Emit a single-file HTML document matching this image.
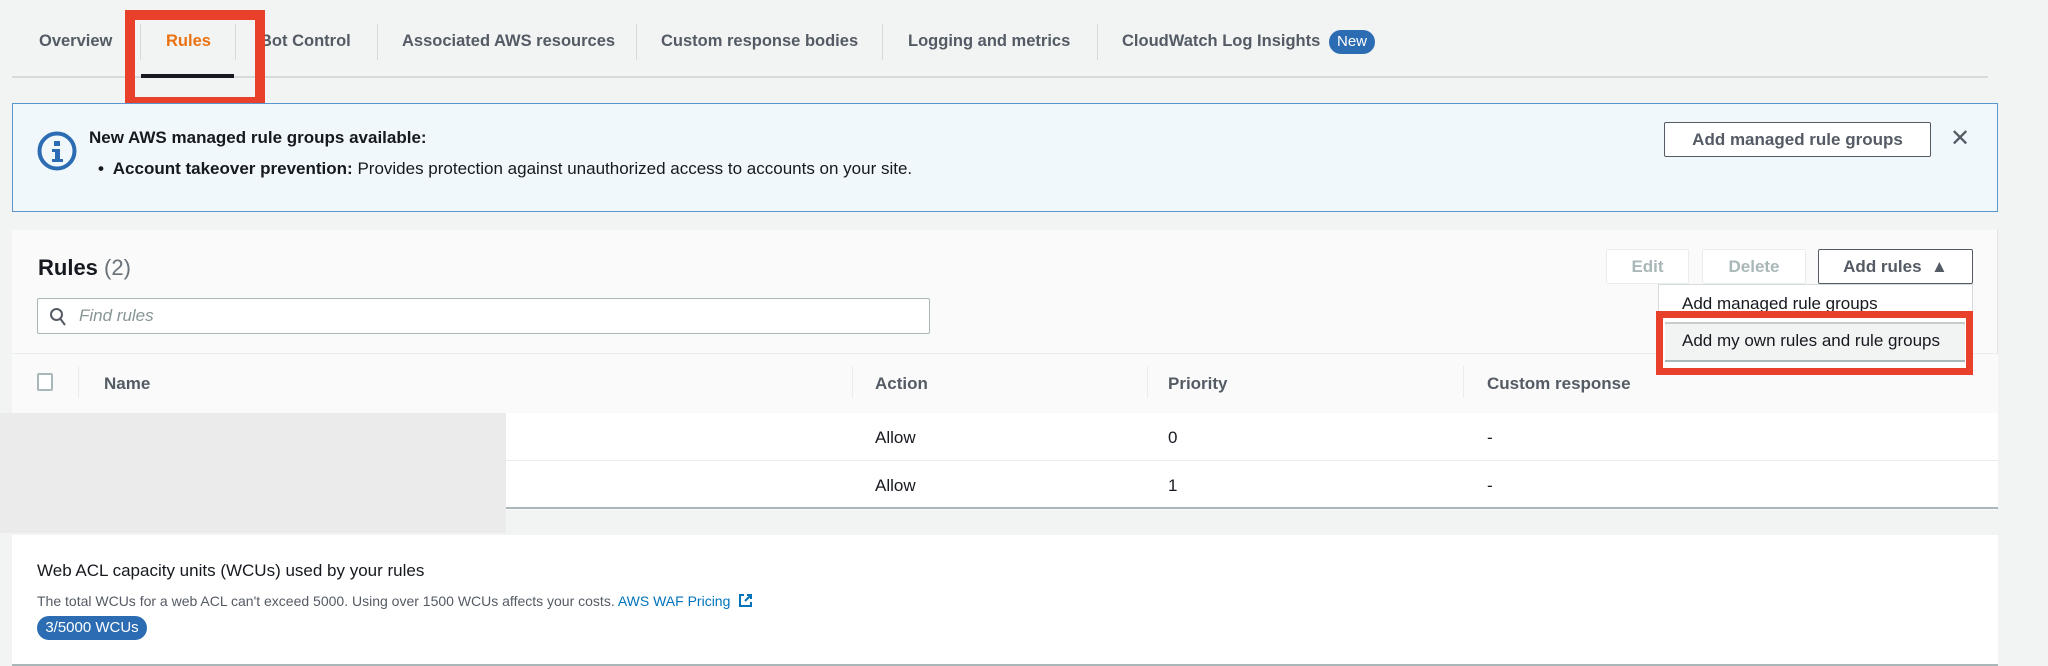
<!DOCTYPE html>
<html><head><style>
*{box-sizing:border-box;margin:0;padding:0}
body{width:2048px;height:666px;background:#f2f3f3;font-family:"Liberation Sans",sans-serif;color:#16191f;position:relative;overflow:hidden}
.a{position:absolute;white-space:nowrap}
.tab{position:absolute;top:32px;font-size:16.5px;font-weight:bold;color:#545b64}
.sep{position:absolute;top:24px;width:1px;height:36px;background:#d5dbdb}
.btn{position:absolute;border:1px solid #545b64;border-radius:2px;background:#fff;font-weight:bold;font-size:17px;color:#545b64;text-align:center}
.th{position:absolute;top:374px;font-size:17px;font-weight:bold;color:#545b64}
.td{position:absolute;font-size:17px;color:#16191f}
.vs{position:absolute;top:366px;width:1px;height:32px;background:#eaeded}
</style></head><body>
<div class="tab" style="left:39px">Overview</div>
<div class="tab" style="left:166px;color:#ec7211">Rules</div>
<div class="tab" style="left:260px">Bot Control</div>
<div class="tab" style="left:402px">Associated AWS resources</div>
<div class="tab" style="left:661px">Custom response bodies</div>
<div class="tab" style="left:908px">Logging and metrics</div>
<div class="tab" style="left:1122px">CloudWatch Log Insights</div>
<div class="a" style="left:1329px;top:30px;width:46px;height:24px;border-radius:12px;background:#2b6cb3;color:#fff;font-size:15px;text-align:center;line-height:24px">New</div>
<div class="sep" style="left:140px"></div><div class="sep" style="left:235px"></div><div class="sep" style="left:377px"></div><div class="sep" style="left:636px"></div><div class="sep" style="left:882px"></div><div class="sep" style="left:1097px"></div>
<div class="a" style="left:12px;top:76px;width:1976px;height:2px;background:#d5dbdb"></div>
<div class="a" style="left:141px;top:74px;width:93px;height:4px;background:#16191f"></div>
<div class="a" style="left:125px;top:10px;width:140px;height:97px;border:10px solid #e8402a"></div>

<div class="a" style="left:12px;top:103px;width:1986px;height:109px;background:#f1f8fc;border:1px solid #5a95d0"></div>
<svg class="a" style="left:36px;top:130px" width="42" height="42" viewBox="0 0 42 42"><circle cx="21" cy="21" r="17.5" fill="none" stroke="#2b6cb3" stroke-width="4"/><rect x="18" y="11" width="6" height="5" fill="#2b6cb3"/><path d="M16 19h8v10h3v3H16v-3h3v-7h-3z" fill="#2b6cb3"/></svg>
<div class="a" style="left:89px;top:128px;font-size:17px;font-weight:bold">New AWS managed rule groups available:</div>
<div class="a" style="left:98px;top:159px;font-size:17px"><b>•&nbsp; Account takeover prevention:</b> Provides protection against unauthorized access to accounts on your site.</div>
<div class="btn" style="left:1664px;top:122px;width:267px;height:35px;line-height:33px">Add managed rule groups</div>
<div class="a" style="left:1950px;top:124px;font-size:24px;color:#545b64">✕</div>

<div class="a" style="left:12px;top:230px;width:1986px;height:280px;background:#fafafa;border-right:1px solid #e0e3e3"></div>
<div class="a" style="left:38px;top:255px;font-size:22px;font-weight:bold">Rules <span style="font-weight:normal;color:#687078">(2)</span></div>
<div class="btn" style="left:1606px;top:249px;width:83px;height:35px;line-height:33px;border-color:#eaeded;color:#aab7b8">Edit</div>
<div class="btn" style="left:1702px;top:249px;width:104px;height:35px;line-height:33px;border-color:#eaeded;color:#aab7b8">Delete</div>
<div class="btn" style="left:1818px;top:249px;width:155px;height:35px;line-height:33px">Add rules &nbsp;▲</div>
<div class="a" style="left:37px;top:298px;width:893px;height:36px;background:#fff;border:1px solid #aab7b8;border-radius:2px"></div>
<svg class="a" style="left:49px;top:307px" width="18" height="20"><circle cx="7.5" cy="7.5" r="5.5" fill="none" stroke="#545b64" stroke-width="2"/><path d="M11.5 12l4.5 6" stroke="#545b64" stroke-width="2"/></svg>
<div class="a" style="left:79px;top:306px;font-size:17px;font-style:italic;color:#879596">Find rules</div>
<div class="a" style="left:12px;top:353px;width:1986px;height:60px;background:#fafafa;border-top:1px solid #eaeded"></div>
<div class="a" style="left:37px;top:373px;width:16px;height:18px;border:2px solid #aab7b8;border-radius:2px;background:#fff"></div>
<div class="vs" style="left:78px"></div><div class="vs" style="left:852px"></div><div class="vs" style="left:1147px"></div><div class="vs" style="left:1463px"></div>
<div class="th" style="left:104px">Name</div><div class="th" style="left:875px">Action</div><div class="th" style="left:1168px">Priority</div><div class="th" style="left:1487px">Custom response</div>
<div class="a" style="left:12px;top:413px;width:1986px;height:96px;background:#fff;border-bottom:2px solid #aab7b8"></div>
<div class="a" style="left:12px;top:460px;width:1986px;height:1px;background:#eaeded"></div>
<div class="td" style="left:875px;top:428px">Allow</div><div class="td" style="left:1168px;top:428px">0</div><div class="td" style="left:1487px;top:428px">-</div>
<div class="td" style="left:875px;top:476px">Allow</div><div class="td" style="left:1168px;top:476px">1</div><div class="td" style="left:1487px;top:476px">-</div>
<div class="a" style="left:0;top:413px;width:506px;height:120px;background:#ebebeb"></div>

<div class="a" style="left:1658px;top:284px;width:315px;height:88px;background:#fff;border:1px solid #d5dbdb"></div>
<div class="a" style="left:1682px;top:294px;font-size:17px">Add managed rule groups</div>
<div class="a" style="left:1665px;top:322px;width:300px;height:40px;background:#f2f3f3;border-top:2px solid #c6cbcb;border-bottom:2px solid #aab7b8"></div>
<div class="a" style="left:1682px;top:331px;font-size:17px">Add my own rules and rule groups</div>
<div class="a" style="left:1656px;top:311px;width:317px;height:64px;border:7px solid #e8402a"></div>

<div class="a" style="left:12px;top:535px;width:1986px;height:131px;background:#fff;border-bottom:2px solid #aab7b8"></div>
<div class="a" style="left:37px;top:561px;font-size:17px">Web ACL capacity units (WCUs) used by your rules</div>
<div class="a" style="left:37px;top:593px;font-size:14px;color:#545b64">The total WCUs for a web ACL can't exceed 5000. Using over 1500 WCUs affects your costs. <span style="color:#0073bb">AWS WAF Pricing</span><svg style="margin-left:8px;vertical-align:-2px" width="15" height="15"><path d="M6 2H2v11h11V9M9 2h4v4M13 2L7 8" fill="none" stroke="#0073bb" stroke-width="2"/></svg></div>
<div class="a" style="left:37px;top:616px;width:110px;height:24px;border-radius:12px;background:#2b6cb3;color:#fff;font-size:15px;text-align:center;line-height:24px">3/5000 WCUs</div>
</body></html>
